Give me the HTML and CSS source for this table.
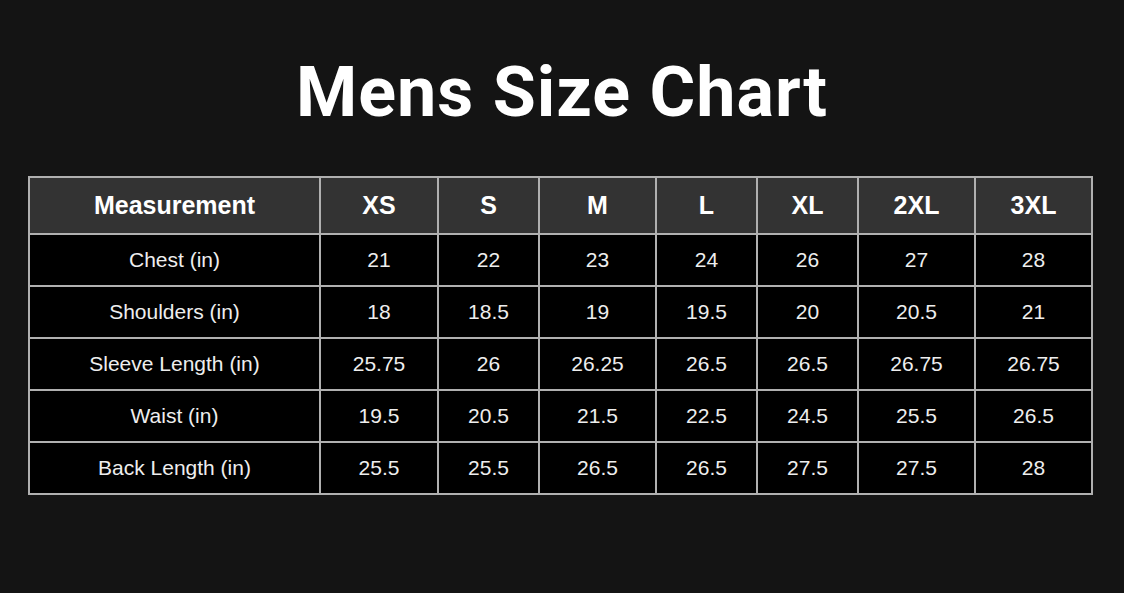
FILE: index.html
```html
<!DOCTYPE html>
<html>
<head>
<meta charset="utf-8">
<link rel="stylesheet" href="styles.css">
</head>
<body>
<div class="page">
  <h1 class="title">Mens Size Chart</h1>
  <table class="chart">
    <colgroup>
      <col class="c-meas"><col class="c-118"><col class="c-101"><col class="c-117"><col class="c-101"><col class="c-101"><col class="c-117"><col class="c-117">
    </colgroup>
    <thead>
      <tr><th>Measurement</th><th>XS</th><th>S</th><th>M</th><th>L</th><th>XL</th><th>2XL</th><th>3XL</th></tr>
    </thead>
    <tbody>
      <tr><td>Chest (in)</td><td>21</td><td>22</td><td>23</td><td>24</td><td>26</td><td>27</td><td>28</td></tr>
      <tr><td>Shoulders (in)</td><td>18</td><td>18.5</td><td>19</td><td>19.5</td><td>20</td><td>20.5</td><td>21</td></tr>
      <tr><td>Sleeve Length (in)</td><td>25.75</td><td>26</td><td>26.25</td><td>26.5</td><td>26.5</td><td>26.75</td><td>26.75</td></tr>
      <tr><td>Waist (in)</td><td>19.5</td><td>20.5</td><td>21.5</td><td>22.5</td><td>24.5</td><td>25.5</td><td>26.5</td></tr>
      <tr><td>Back Length (in)</td><td>25.5</td><td>25.5</td><td>26.5</td><td>26.5</td><td>27.5</td><td>27.5</td><td>28</td></tr>
    </tbody>
  </table>
</div>
</body>
</html>
```

FILE: styles.css
```css
html, body {
  margin: 0;
  padding: 0;
  background: #141414;
}
.page {
  width: 1124px;
  height: 593px;
  padding-top: 52px;
  box-sizing: border-box;
}
.title {
  margin: 0;
  text-align: center;
  font-family: Roboto, "Noto Sans", sans-serif;
  font-weight: 700;
  font-size: 70px;
  line-height: 80px;
  color: #ffffff;
  letter-spacing: 1px;
}
.chart {
  margin: 44px 0 0 28px;
  border-collapse: collapse;
  table-layout: fixed;
  width: 1064px;
  font-family: "Liberation Sans", Arial, sans-serif;
  color: #eeeeee;
}
.c-meas { width: 291px; }
.c-118 { width: 118px; }
.c-101 { width: 101px; }
.c-117 { width: 117px; }
.chart th, .chart td {
  border: 2px solid #b0b0b0;
  text-align: center;
  vertical-align: middle;
  padding: 0;
}
.chart th {
  background: #333333;
  color: #ffffff;
  font-weight: 700;
  font-size: 25px;
  height: 55px;
}
.chart td {
  background: #000000;
  font-size: 21px;
  height: 50px;
}
```
